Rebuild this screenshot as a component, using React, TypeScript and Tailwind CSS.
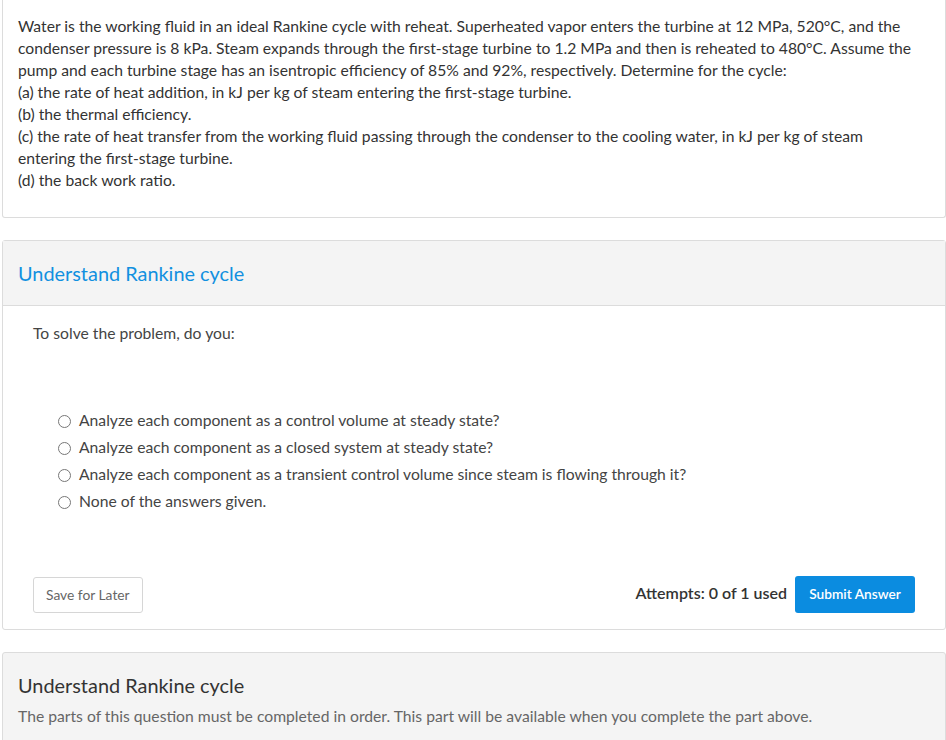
const options = [
  "Analyze each component as a control volume at steady state?",
  "Analyze each component as a closed system at steady state?",
  "Analyze each component as a transient control volume since steam is flowing through it?",
  "None of the answers given.",
];

function Radio() {
  return (
    <span className="w-[13px] h-[13px] rounded-full border border-[#777] bg-white shrink-0" />
  );
}

export default function App() {
  return (
    <div className="min-h-[740px] bg-white pl-[2px] w-[946px] overflow-hidden text-[#333] font-['Lato','Open_Sans',sans-serif]">
      {/* problem statement */}
      <div className="w-[944px] border border-t-0 border-[#dcdcdc] rounded-b-[3px] pl-[15px] pr-[15px] pt-[15px] pb-[26px] text-[15.7px] leading-[22px]">
        <p>
          Water is the working fluid in an ideal Rankine cycle with reheat. Superheated vapor enters the turbine at 12 MPa, 520°C, and the
          <br />
          condenser pressure is 8 kPa. Steam expands through the first-stage turbine to 1.2 MPa and then is reheated to 480°C. Assume the
          <br />
          pump and each turbine stage has an isentropic efficiency of 85% and 92%, respectively. Determine for the cycle:
        </p>
        <p>(a) the rate of heat addition, in kJ per kg of steam entering the first-stage turbine.</p>
        <p>(b) the thermal efficiency.</p>
        <p>
          (c) the rate of heat transfer from the working fluid passing through the condenser to the cooling water, in kJ per kg of steam
          <br />
          entering the first-stage turbine.
        </p>
        <p>(d) the back work ratio.</p>
      </div>

      {/* active part */}
      <div className="w-[944px] mt-[22px] border border-[#dcdcdc] rounded-[3px]">
        <div className="h-[65px] bg-[#f4f4f4] border-b border-[#dcdcdc] flex items-center px-[15px] pt-[2px]">
          <h2 className="text-[19.9px] text-[#1190e0]">Understand Rankine cycle</h2>
        </div>
        <div className="px-[30px] pt-[16px] pb-[16px]">
          <p className="text-[15.7px] leading-[22px] text-[#444]">To solve the problem, do you:</p>
          <ul className="mt-[66px] pl-[25px] flex flex-col gap-[5px]">
            {options.map((o) => (
              <li key={o} className="flex items-center gap-[8px] h-[22px] text-[15.7px] text-[#444]">
                <Radio />
                <span>{o}</span>
              </li>
            ))}
          </ul>
          <div className="mt-[63px] flex items-center justify-between">
            <button className="h-[36px] px-[12px] border border-[#d6d6d6] rounded-[3px] bg-white text-[13.8px] text-[#666] mt-[1px]">
              Save for Later
            </button>
            <div className="flex items-center gap-[8px]">
              <span className="text-[16px] font-semibold text-[#333] -mt-[4px]">Attempts: 0 of 1 used</span>
              <button className="h-[37px] w-[120px] rounded-[3px] bg-[#0b8ce0] text-white text-[13.7px] font-semibold">
                Submit Answer
              </button>
            </div>
          </div>
        </div>
      </div>

      {/* locked part */}
      <div className="w-[944px] mt-[22px] border border-[#dcdcdc] rounded-[3px] bg-[#f4f4f4] px-[15px] pt-[19px] pb-[20px]">
        <h2 className="text-[19.9px] leading-[26px] text-[#333]">Understand Rankine cycle</h2>
        <p className="mt-[7px] text-[15.7px] leading-[22px] text-[#666]">
          The parts of this question must be completed in order. This part will be available when you complete the part above.
        </p>
      </div>
    </div>
  );
}
